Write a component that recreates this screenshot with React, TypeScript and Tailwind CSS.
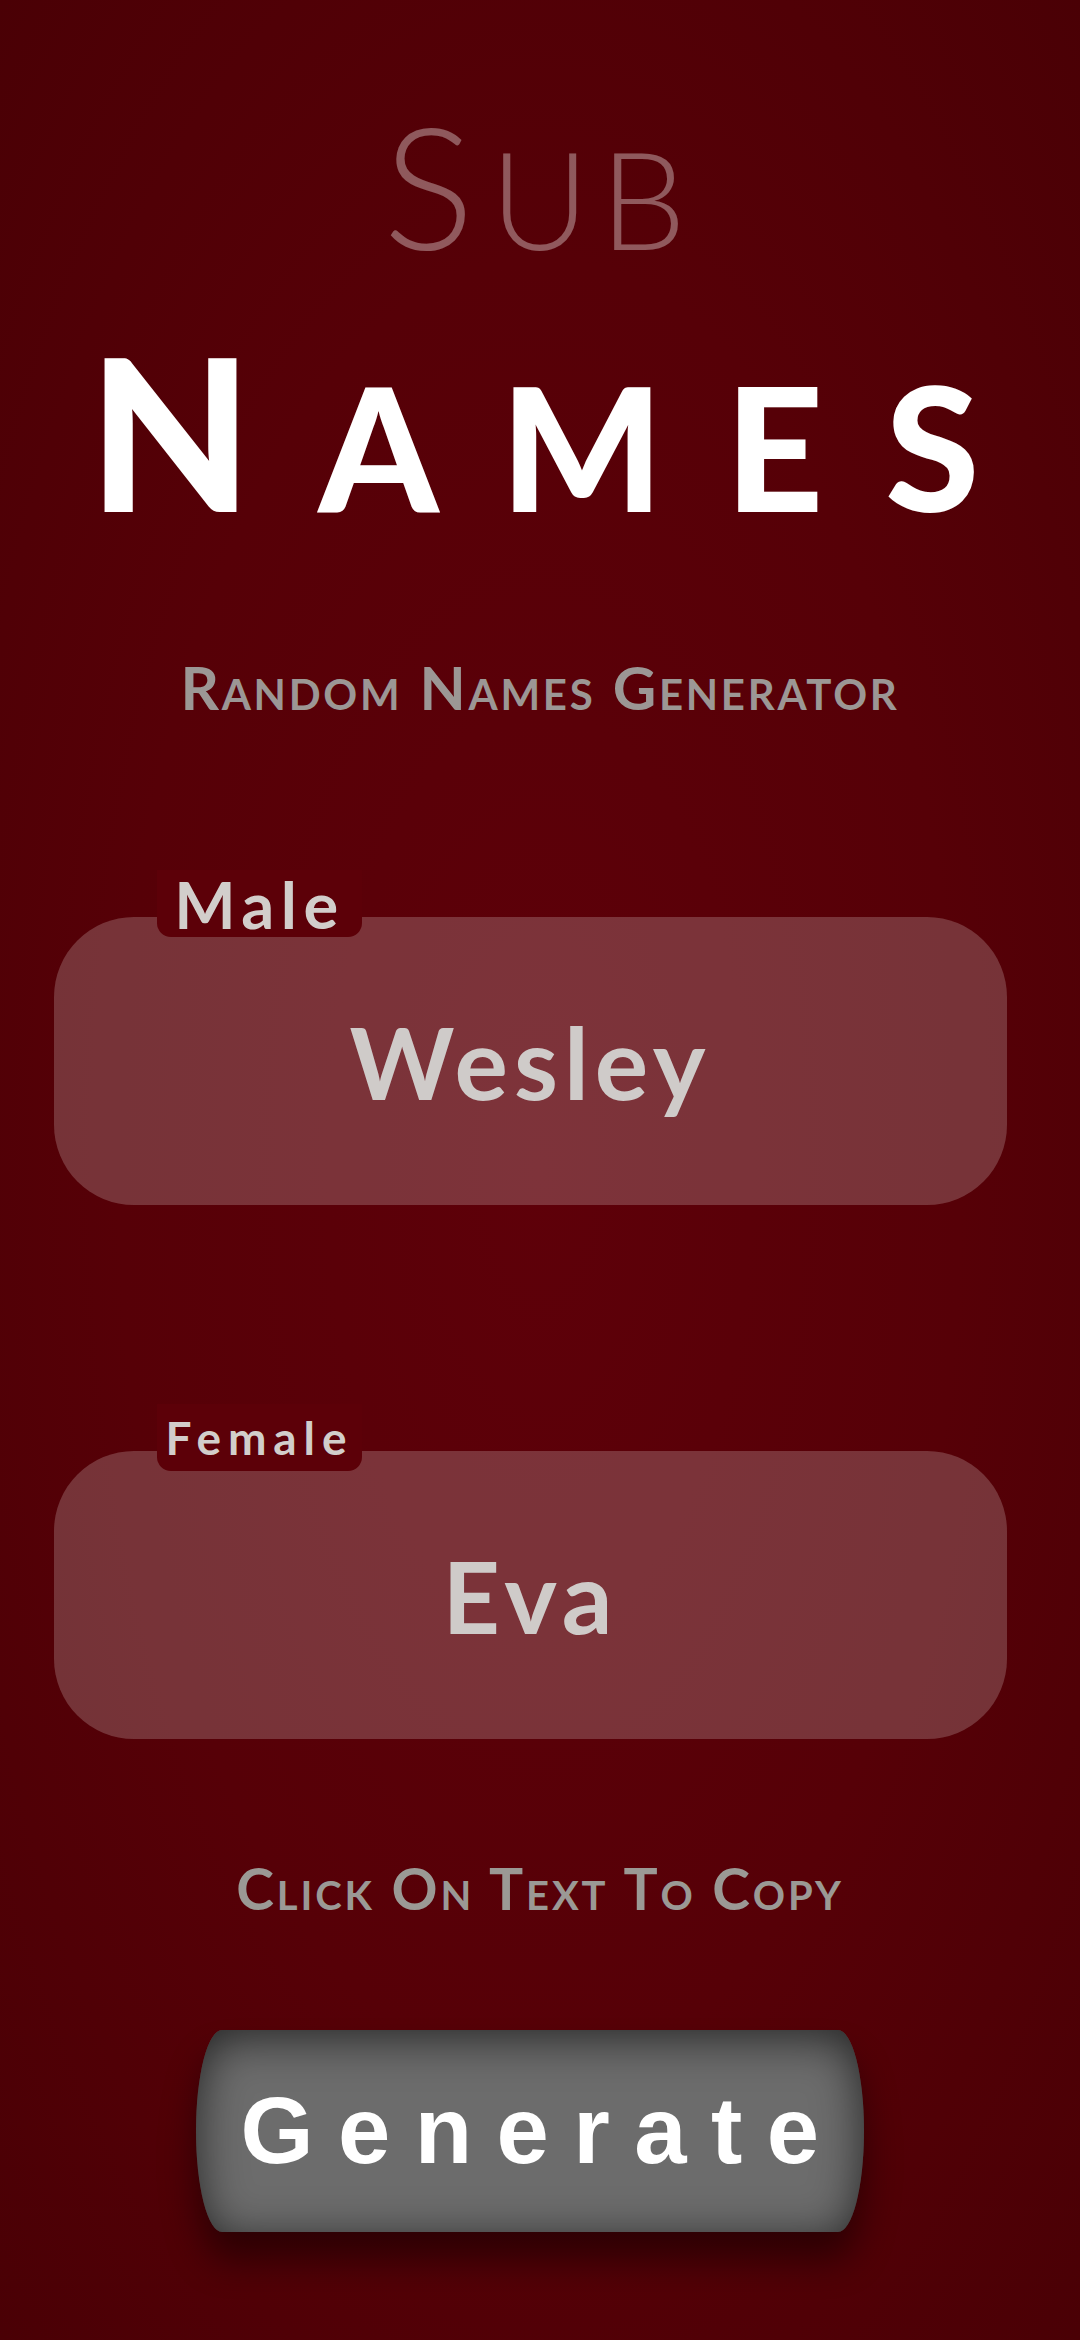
import { useState } from "react";

const maleNames = ["Wesley", "Oliver", "Henry", "Lucas", "Arthur"];
const femaleNames = ["Eva", "Clara", "Sophie", "Alice", "Nora"];

function NameCard({
  label,
  name,
  labelClass,
  labelPad,
}: {
  label: string;
  name: string;
  labelClass: string;
  labelPad: string;
}) {
  return (
    <div className="relative ml-[54px] flex h-[288px] w-[953px] items-center justify-center rounded-[80px] bg-white/20">
      {/* ── tab label sitting over the card edge ── */}
      <div
        className={`absolute left-[103px] top-[-47px] flex h-[67px] w-[205px] items-end justify-center rounded-b-[14px] bg-[#5c0008] ${labelPad}`}
      >
        <span className={`font-bold leading-none text-[#d2cecb] ${labelClass}`}>{label}</span>
      </div>
      <span className="text-[100px] font-bold leading-none tracking-[0.06em] text-[#cfcbc9]">
        {name}
      </span>
    </div>
  );
}

export default function App() {
  const [idx, setIdx] = useState(0);

  return (
    <div
      className="flex min-h-[2340px] w-full flex-col bg-[radial-gradient(ellipse_at_center,#5e0009_0%,#560007_55%,#4a0005_100%)]"
      style={{ fontFamily: "Lato, 'Open Sans', sans-serif" }}
    >
      {/* ── Title ── */}
      <div className="mt-[99px] flex h-[170px] items-baseline justify-center text-[170px] font-light leading-none text-white/35">
        <span>S</span>
        <span className="ml-[16px] text-[136px] uppercase tracking-[0.08em]">ub</span>
      </div>

      <div className="mt-[55px] flex h-[212px] items-baseline justify-center pl-[50px] text-[212px] font-black leading-none text-white">
        <span className="mr-[66px]">N</span>
        <span className="text-[171px] uppercase tracking-[62px]">ames</span>
      </div>

      <p className="mt-[121px] text-center text-[60px] font-bold leading-none tracking-[0.045em] text-[#9c9795] [font-variant:small-caps]">
        Random Names Generator
      </p>

      {/* ── Cards ── */}
      <div className="mt-[200px]">
        <NameCard
          label="Male"
          name={maleNames[idx % maleNames.length]}
          labelClass="text-[65px] tracking-[0.1em]"
          labelPad="pb-0"
        />
      </div>
      <div className="mt-[246px]">
        <NameCard
          label="Female"
          name={femaleNames[idx % femaleNames.length]}
          labelClass="text-[46px] tracking-[0.15em]"
          labelPad="pb-[10px]"
        />
      </div>

      <p className="mt-[121px] text-center text-[57px] font-bold leading-none tracking-[0.05em] text-[#9b9995] [font-variant:small-caps]">
        Click On Text To Copy
      </p>

      {/* ── Generate ── */}
      <button
        onClick={() => setIdx(idx + 1)}
        className="ml-[196px] mt-[113px] flex h-[202px] w-[668px] items-center justify-center rounded-[26px/101px] bg-[#6c6c6c] shadow-[inset_0_8px_45px_rgba(0,0,0,0.65),0_28px_36px_rgba(0,0,0,0.45)]"
      >
        <span
          className="pl-[24px] text-[94px] font-bold leading-none tracking-[0.26em] text-white"
          style={{ fontFamily: "'Liberation Sans', Arial, sans-serif" }}
        >
          Generate
        </span>
      </button>
    </div>
  );
}
